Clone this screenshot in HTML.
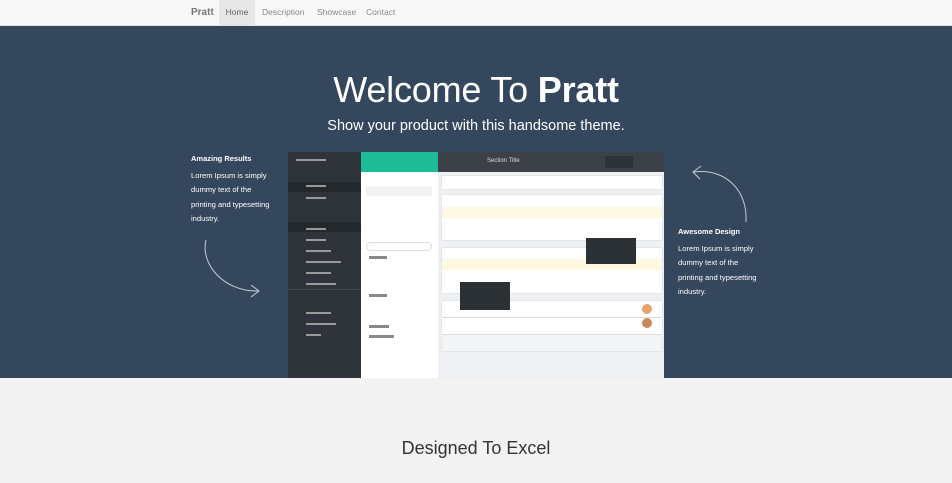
<!DOCTYPE html>
<html><head><meta charset="utf-8"><style>
*{margin:0;padding:0;box-sizing:border-box}
body{width:952px;height:483px;overflow:hidden;font-family:"Liberation Sans",sans-serif;background:#f3f3f3;position:relative}
.nav{position:absolute;left:0;top:0;width:952px;height:26px;background:#f8f8f8;border-bottom:1px solid #e3e3e3}
.nav span{position:absolute;top:0;height:25px;line-height:25px;font-size:8.5px;color:#888}
.hero{position:absolute;left:0;top:26px;width:952px;height:352px;background:#34475d}
h1{position:absolute;top:69px;left:0;width:952px;text-align:center;color:#fff;font-weight:normal;font-size:36px;letter-spacing:-0.2px}
.sub{position:absolute;top:118px;left:0;width:952px;text-align:center;color:#fff;font-size:14.5px}
.side{position:absolute;color:#fff;font-size:7.6px;line-height:14.5px}
.side b{display:block;font-size:7.5px;margin-bottom:2px}
.shot{position:absolute;left:288px;top:152px;width:376px;height:226px;background:#eef0f3;overflow:hidden}
.d{position:absolute;left:0;top:0;width:73px;height:226px;background:#2e3439}
.w{position:absolute;left:73px;top:0;width:77px;height:226px;background:#fff}
.g{position:absolute;left:73px;top:0;width:77px;height:20px;background:#1dbc94}
.t{position:absolute;left:150px;top:0;width:226px;height:20px;background:#3b4147}
.card{position:absolute;left:154px;width:220px;background:#fff;box-shadow:0 0 1px #bbb}
.l{position:absolute;height:2px;background:#777}
h2{position:absolute;top:438px;left:0;width:952px;text-align:center;font-weight:normal;font-size:18px;color:#333}
</style></head><body>
<div class="nav">
<span style="left:191px;font-size:10px;color:#777;font-weight:bold">Pratt</span>
<span style="left:219px;width:36px;background:#e7e7e7;text-align:center;color:#666">Home</span>
<span style="left:262px">Description</span>
<span style="left:317px">Showcase</span>
<span style="left:366px">Contact</span>
</div>
<div class="hero"></div>
<h1>Welcome To <b>Pratt</b></h1>
<div class="sub">Show your product with this handsome theme.</div>
<div class="side" style="left:191px;top:152px;width:84px"><b>Amazing Results</b>Lorem Ipsum is simply dummy text of the printing and typesetting industry.</div>
<div class="side" style="left:678px;top:225px;width:84px"><b>Awesome Design</b>Lorem Ipsum is simply dummy text of the printing and typesetting industry.</div>
<svg style="position:absolute;left:0;top:0" width="952" height="483"><g fill="none" stroke="#c8ccd2" stroke-width="1">
<path d="M206 240 C200 265 225 292 258 291"/><path d="M251 285 L259 291 L251 297"/>
<path d="M746 222 C748 190 725 168 694 172"/><path d="M701 166 L693 172 L700 179"/></g></svg>
<div class="shot">
<div class="d"></div><div class="w"></div><div class="g"></div><div class="t"></div>
<div style="position:absolute;left:0;top:30px;width:73px;height:10px;background:#24292d"></div>
<div style="position:absolute;left:0;top:70px;width:73px;height:10px;background:#24292d"></div>
<div style="position:absolute;left:0;top:137px;width:73px;height:1px;background:#454b51"></div>
<div style="position:absolute;left:78px;top:34px;width:66px;height:10px;background:#f1f2f4"></div>
<div style="position:absolute;left:78px;top:90px;width:66px;height:9px;border:1px solid #ddd;border-radius:5px"></div>
<div style="position:absolute;left:317px;top:4px;width:28px;height:12px;background:#2e3338"></div>
<div style="position:absolute;left:199px;top:6px;font-size:6px;color:#ddd">Section Title</div>
<div class="card" style="top:24px;height:13px"></div>
<div class="card" style="top:43px;height:45px"><div style="position:absolute;left:0;top:12px;width:220px;height:11px;background:#fdf9e3"></div></div>
<div class="card" style="top:96px;height:45px"><div style="position:absolute;left:0;top:11px;width:220px;height:11px;background:#fdf9e3"></div></div>
<div class="card" style="top:149px;height:16px"></div>
<div class="card" style="top:166px;height:16px"></div>
<div class="card" style="top:183px;height:16px;background:#f4f5f6"></div>
<div style="position:absolute;left:298px;top:86px;width:50px;height:26px;background:#2b3035"></div>
<div style="position:absolute;left:172px;top:130px;width:50px;height:28px;background:#2b3035"></div>
<div style="position:absolute;left:354px;top:152px;width:10px;height:10px;border-radius:5px;background:#e8a36a"></div>
<div style="position:absolute;left:354px;top:166px;width:10px;height:10px;border-radius:5px;background:#c98a5a"></div>
<div class="l" style="left:8px;top:7px;width:30px;background:#999"></div>
<div class="l" style="left:18px;top:33px;width:20px;background:#999"></div>
<div class="l" style="left:18px;top:45px;width:20px;background:#999"></div>
<div class="l" style="left:18px;top:76px;width:20px;background:#999"></div>
<div class="l" style="left:18px;top:87px;width:20px;background:#999"></div>
<div class="l" style="left:18px;top:98px;width:25px;background:#999"></div>
<div class="l" style="left:18px;top:109px;width:35px;background:#999"></div>
<div class="l" style="left:18px;top:120px;width:25px;background:#999"></div>
<div class="l" style="left:18px;top:131px;width:30px;background:#999"></div>
<div class="l" style="left:18px;top:160px;width:25px;background:#999"></div>
<div class="l" style="left:18px;top:171px;width:30px;background:#999"></div>
<div class="l" style="left:18px;top:182px;width:15px;background:#999"></div>
<div class="l" style="left:81px;top:104px;width:18px;height:3px;background:#888"></div>
<div class="l" style="left:81px;top:142px;width:18px;height:3px;background:#888"></div>
<div class="l" style="left:81px;top:173px;width:20px;height:3px;background:#888"></div>
<div class="l" style="left:81px;top:183px;width:25px;height:3px;background:#888"></div>
</div>
<h2>Designed To Excel</h2>
</body></html>
